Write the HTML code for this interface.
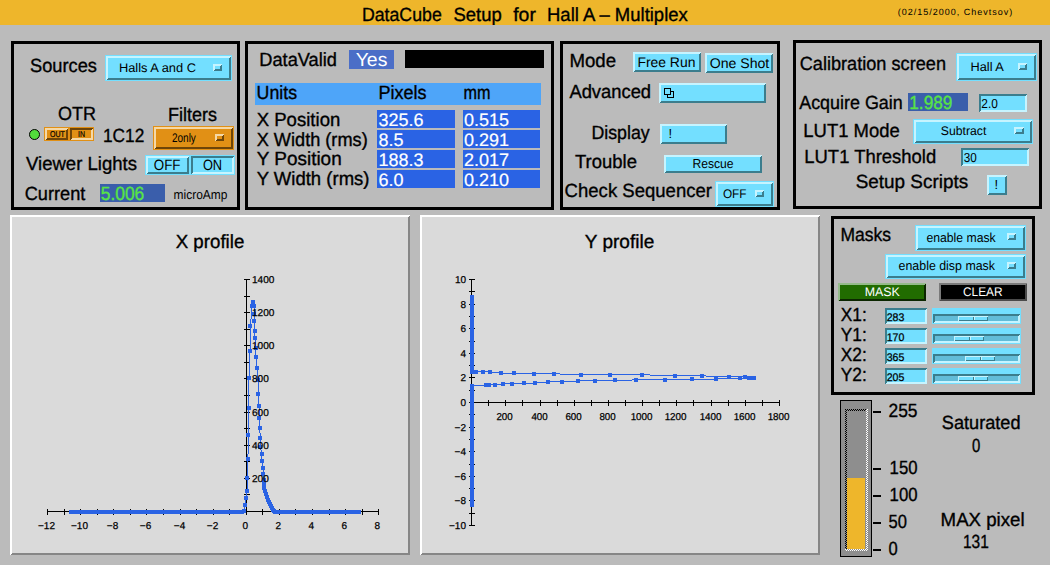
<!DOCTYPE html>
<html><head><meta charset="utf-8"><style>
html,body{margin:0;padding:0;background:#bbbbbb;width:1050px;height:565px;overflow:hidden}
svg text{font-family:"Liberation Sans",sans-serif}
</style></head><body>
<svg width="1050" height="565" viewBox="0 0 1050 565" style="position:absolute;left:0;top:0" shape-rendering="crispEdges" text-rendering="geometricPrecision">
<rect x="0" y="0" width="1050" height="565" fill="#bbbbbb"/>
<rect x="0" y="0" width="1050" height="25" fill="#eeb62b"/>
<text x="361.90" y="21.00" font-size="19" fill="#000" font-weight="normal" textLength="79.90" lengthAdjust="spacingAndGlyphs" stroke="#000" stroke-width="0.35">DataCube</text>
<text x="453.50" y="21.00" font-size="19" fill="#000" font-weight="normal" textLength="48.31" lengthAdjust="spacingAndGlyphs" stroke="#000" stroke-width="0.35">Setup</text>
<text x="513.20" y="21.00" font-size="19" fill="#000" font-weight="normal" textLength="22.70" lengthAdjust="spacingAndGlyphs" stroke="#000" stroke-width="0.35">for</text>
<text x="547.00" y="21.00" font-size="19" fill="#000" font-weight="normal" textLength="140.80" lengthAdjust="spacingAndGlyphs" stroke="#000" stroke-width="0.35">Hall A – Multiplex</text>
<text x="897.70" y="15.40" font-size="9" fill="#000" font-weight="normal" textLength="114.60" lengthAdjust="spacing">(02/15/2000, Chevtsov)</text>
<rect x="11" y="41" width="229" height="3" fill="#000"/>
<rect x="11" y="207" width="229" height="3" fill="#000"/>
<rect x="11" y="41" width="3" height="169" fill="#000"/>
<rect x="237" y="41" width="3" height="169" fill="#000"/>
<rect x="245" y="41" width="309" height="3" fill="#000"/>
<rect x="245" y="207" width="309" height="3" fill="#000"/>
<rect x="245" y="41" width="3" height="169" fill="#000"/>
<rect x="551" y="41" width="3" height="169" fill="#000"/>
<rect x="560" y="41" width="220" height="3" fill="#000"/>
<rect x="560" y="207" width="220" height="3" fill="#000"/>
<rect x="560" y="41" width="3" height="169" fill="#000"/>
<rect x="777" y="41" width="3" height="169" fill="#000"/>
<rect x="793" y="40" width="249" height="3" fill="#000"/>
<rect x="793" y="206" width="249" height="3" fill="#000"/>
<rect x="793" y="40" width="3" height="169" fill="#000"/>
<rect x="1039" y="40" width="3" height="169" fill="#000"/>
<rect x="831" y="216" width="204" height="3" fill="#000"/>
<rect x="831" y="392" width="204" height="3" fill="#000"/>
<rect x="831" y="216" width="3" height="179" fill="#000"/>
<rect x="1032" y="216" width="3" height="179" fill="#000"/>
<text x="30.00" y="71.70" font-size="19" fill="#000" font-weight="normal" textLength="67.01" lengthAdjust="spacingAndGlyphs" stroke="#000" stroke-width="0.35">Sources</text>
<rect x="105" y="55" width="127" height="26" fill="#73dfff"/>
<polygon points="106,56 231,56 229,58 108,58 108,78 106,80" fill="#c6f4ff"/>
<polygon points="231,56 231,80 106,80 108,78 229,78 229,58" fill="#3b7d8d"/>
<polygon points="213,64 222,64 220,66 215,66 215,69 213,71" fill="#c6f4ff"/>
<polygon points="222,64 222,71 213,71 215,69 220,69 220,66" fill="#3b7d8d"/>
<text x="118.90" y="72.00" font-size="12.5" fill="#000" font-weight="normal" textLength="77.11" lengthAdjust="spacingAndGlyphs">Halls A and C</text>
<text x="58.00" y="120.00" font-size="19" fill="#000" font-weight="normal" textLength="38.00" lengthAdjust="spacingAndGlyphs" stroke="#000" stroke-width="0.35">OTR</text>
<text x="168.00" y="120.50" font-size="19" fill="#000" font-weight="normal" textLength="49.00" lengthAdjust="spacingAndGlyphs" stroke="#000" stroke-width="0.35">Filters</text>
<circle cx="34.5" cy="134.5" r="5" fill="#52dc3c" stroke="#000" stroke-width="1" shape-rendering="geometricPrecision"/>
<rect x="44" y="127" width="50" height="14" fill="#e19015"/>
<rect x="45" y="128" width="23" height="12" fill="#e19015"/>
<polygon points="45,128 68,128 66,130 47,130 47,138 45,140" fill="#f5d8a6"/>
<polygon points="68,128 68,140 45,140 47,138 66,138 66,130" fill="#6e4508"/>
<rect x="70" y="128" width="23" height="12" fill="#e19015"/>
<polygon points="70,128 93,128 91,130 72,130 72,138 70,140" fill="#6e4508"/>
<polygon points="93,128 93,140 70,140 72,138 91,138 91,130" fill="#f5d8a6"/>
<text x="50.00" y="137.00" font-size="8.5" fill="#000" font-weight="normal" textLength="14.90" lengthAdjust="spacingAndGlyphs" stroke="#000" stroke-width="0.2">OUT</text>
<text x="78.00" y="137.00" font-size="8.5" fill="#000" font-weight="normal" textLength="7.00" lengthAdjust="spacingAndGlyphs" stroke="#000" stroke-width="0.2">IN</text>
<text x="102.90" y="141.80" font-size="19" fill="#000" font-weight="normal" textLength="41.39" lengthAdjust="spacingAndGlyphs" stroke="#000" stroke-width="0.35">1C12</text>
<rect x="153" y="126" width="81" height="24" fill="#e19015"/>
<polygon points="154,127 233,127 231,129 156,129 156,147 154,149" fill="#f5d8a6"/>
<polygon points="233,127 233,149 154,149 156,147 231,147 231,129" fill="#6e4508"/>
<polygon points="215,134 224,134 222,136 217,136 217,139 215,141" fill="#f5d8a6"/>
<polygon points="224,134 224,141 215,141 217,139 222,139 222,136" fill="#6e4508"/>
<text x="171.90" y="142.10" font-size="12.5" fill="#000" font-weight="normal" textLength="24.00" lengthAdjust="spacingAndGlyphs">2only</text>
<text x="26.00" y="170.20" font-size="19" fill="#000" font-weight="normal" textLength="111.00" lengthAdjust="spacingAndGlyphs" stroke="#000" stroke-width="0.35">Viewer Lights</text>
<rect x="145" y="155" width="90" height="20" fill="#73dfff"/>
<rect x="146" y="156" width="43" height="18" fill="#73dfff"/>
<polygon points="146,156 189,156 187,158 148,158 148,172 146,174" fill="#c6f4ff"/>
<polygon points="189,156 189,174 146,174 148,172 187,172 187,158" fill="#3b7d8d"/>
<rect x="191" y="156" width="43" height="18" fill="#73dfff"/>
<polygon points="191,156 234,156 232,158 193,158 193,172 191,174" fill="#3b7d8d"/>
<polygon points="234,156 234,174 191,174 193,172 232,172 232,158" fill="#c6f4ff"/>
<text x="153.80" y="170.00" font-size="15" fill="#000" font-weight="normal" textLength="26.69" lengthAdjust="spacingAndGlyphs">OFF</text>
<text x="202.90" y="170.00" font-size="15" fill="#000" font-weight="normal" textLength="19.20" lengthAdjust="spacingAndGlyphs">ON</text>
<text x="24.70" y="200.30" font-size="19" fill="#000" font-weight="normal" textLength="60.69" lengthAdjust="spacingAndGlyphs" stroke="#000" stroke-width="0.35">Current</text>
<rect x="100" y="184" width="65" height="18" fill="#3a5eab"/>
<text x="100.70" y="199.90" font-size="19" fill="#58e444" font-weight="normal" textLength="43.61" lengthAdjust="spacingAndGlyphs" stroke="#58e444" stroke-width="0.35">5.006</text>
<text x="173.60" y="198.60" font-size="13" fill="#000" font-weight="normal" textLength="53.79" lengthAdjust="spacingAndGlyphs">microAmp</text>
<text x="259.30" y="65.60" font-size="19" fill="#000" font-weight="normal" textLength="77.70" lengthAdjust="spacingAndGlyphs" stroke="#000" stroke-width="0.35">DataValid</text>
<rect x="349" y="50" width="45" height="19" fill="#4b6ec7"/>
<text x="355.70" y="65.90" font-size="19" fill="#fff" font-weight="normal" textLength="31.71" lengthAdjust="spacingAndGlyphs">Yes</text>
<rect x="405" y="50" width="139" height="18" fill="#000"/>
<rect x="255" y="83" width="286" height="22" fill="#4ea5f9"/>
<text x="256.60" y="99.00" font-size="19" fill="#000" font-weight="normal" textLength="40.41" lengthAdjust="spacingAndGlyphs" stroke="#000" stroke-width="0.35">Units</text>
<text x="378.40" y="99.00" font-size="19" fill="#000" font-weight="normal" textLength="47.99" lengthAdjust="spacingAndGlyphs" stroke="#000" stroke-width="0.35">Pixels</text>
<text x="463.60" y="99.00" font-size="19" fill="#000" font-weight="normal" textLength="27.00" lengthAdjust="spacingAndGlyphs" stroke="#000" stroke-width="0.35">mm</text>
<text x="256.70" y="126.00" font-size="19" fill="#000" font-weight="normal" textLength="83.61" lengthAdjust="spacingAndGlyphs" stroke="#000" stroke-width="0.35">X Position</text>
<rect x="377" y="110" width="78" height="18" fill="#2a63e4"/>
<rect x="463" y="110" width="77" height="18" fill="#2a63e4"/>
<text x="378.50" y="125.50" font-size="18" fill="#fff" font-weight="normal" textLength="45.04" lengthAdjust="spacingAndGlyphs" stroke="#fff" stroke-width="0.2">325.6</text>
<text x="464.00" y="125.50" font-size="18" fill="#fff" font-weight="normal" textLength="45.04" lengthAdjust="spacingAndGlyphs" stroke="#fff" stroke-width="0.2">0.515</text>
<text x="256.70" y="145.50" font-size="19" fill="#000" font-weight="normal" textLength="111.00" lengthAdjust="spacingAndGlyphs" stroke="#000" stroke-width="0.35">X Width (rms)</text>
<rect x="377" y="130" width="78" height="18" fill="#2a63e4"/>
<rect x="463" y="130" width="77" height="18" fill="#2a63e4"/>
<text x="378.50" y="145.50" font-size="18" fill="#fff" font-weight="normal" textLength="25.02" lengthAdjust="spacingAndGlyphs" stroke="#fff" stroke-width="0.2">8.5</text>
<text x="464.00" y="145.50" font-size="18" fill="#fff" font-weight="normal" textLength="45.04" lengthAdjust="spacingAndGlyphs" stroke="#fff" stroke-width="0.2">0.291</text>
<text x="256.70" y="165.00" font-size="19" fill="#000" font-weight="normal" textLength="85.01" lengthAdjust="spacingAndGlyphs" stroke="#000" stroke-width="0.35">Y Position</text>
<rect x="377" y="150" width="78" height="18" fill="#2a63e4"/>
<rect x="463" y="150" width="77" height="18" fill="#2a63e4"/>
<text x="378.50" y="165.50" font-size="18" fill="#fff" font-weight="normal" textLength="45.04" lengthAdjust="spacingAndGlyphs" stroke="#fff" stroke-width="0.2">188.3</text>
<text x="464.00" y="165.50" font-size="18" fill="#fff" font-weight="normal" textLength="45.04" lengthAdjust="spacingAndGlyphs" stroke="#fff" stroke-width="0.2">2.017</text>
<text x="256.70" y="184.50" font-size="19" fill="#000" font-weight="normal" textLength="112.80" lengthAdjust="spacingAndGlyphs" stroke="#000" stroke-width="0.35">Y Width (rms)</text>
<rect x="377" y="170" width="78" height="18" fill="#2a63e4"/>
<rect x="463" y="170" width="77" height="18" fill="#2a63e4"/>
<text x="378.50" y="185.50" font-size="18" fill="#fff" font-weight="normal" textLength="25.02" lengthAdjust="spacingAndGlyphs" stroke="#fff" stroke-width="0.2">6.0</text>
<text x="464.00" y="185.50" font-size="18" fill="#fff" font-weight="normal" textLength="45.04" lengthAdjust="spacingAndGlyphs" stroke="#fff" stroke-width="0.2">0.210</text>
<text x="569.40" y="66.60" font-size="19" fill="#000" font-weight="normal" textLength="46.71" lengthAdjust="spacingAndGlyphs" stroke="#000" stroke-width="0.35">Mode</text>
<rect x="633" y="52" width="68" height="20" fill="#73dfff"/>
<polygon points="633,52 701,52 699,54 635,54 635,70 633,72" fill="#c6f4ff"/>
<polygon points="701,52 701,72 633,72 635,70 699,70 699,54" fill="#3b7d8d"/>
<text x="637.40" y="66.60" font-size="14" fill="#000" font-weight="normal" textLength="58.01" lengthAdjust="spacingAndGlyphs">Free Run</text>
<rect x="705" y="53" width="68" height="20" fill="#73dfff"/>
<polygon points="705,53 773,53 771,55 707,55 707,71 705,73" fill="#c6f4ff"/>
<polygon points="773,53 773,73 705,73 707,71 771,71 771,55" fill="#3b7d8d"/>
<text x="709.70" y="67.60" font-size="14" fill="#000" font-weight="normal" textLength="59.60" lengthAdjust="spacingAndGlyphs">One Shot</text>
<text x="569.40" y="97.80" font-size="19" fill="#000" font-weight="normal" textLength="81.70" lengthAdjust="spacingAndGlyphs" stroke="#000" stroke-width="0.35">Advanced</text>
<rect x="659" y="83" width="107" height="20" fill="#73dfff"/>
<polygon points="659,83 766,83 764,85 661,85 661,101 659,103" fill="#c6f4ff"/>
<polygon points="766,83 766,103 659,103 661,101 764,101 764,85" fill="#3b7d8d"/>
<g stroke="#000" stroke-width="1"><rect x="667.5" y="91.5" width="6" height="6" fill="none"/><rect x="664.5" y="88.5" width="6" height="6" fill="#73dfff"/></g>
<text x="591.40" y="139.30" font-size="19" fill="#000" font-weight="normal" textLength="58.30" lengthAdjust="spacingAndGlyphs" stroke="#000" stroke-width="0.35">Display</text>
<rect x="660" y="124" width="67" height="20" fill="#73dfff"/>
<polygon points="660,124 727,124 725,126 662,126 662,142 660,144" fill="#c6f4ff"/>
<polygon points="727,124 727,144 660,144 662,142 725,142 725,126" fill="#3b7d8d"/>
<text x="668.50" y="138.40" font-size="13" fill="#000" font-weight="normal" textLength="3.61" lengthAdjust="spacingAndGlyphs">!</text>
<text x="575.00" y="168.20" font-size="19" fill="#000" font-weight="normal" textLength="61.99" lengthAdjust="spacingAndGlyphs" stroke="#000" stroke-width="0.35">Trouble</text>
<rect x="664" y="155" width="98" height="18" fill="#73dfff"/>
<polygon points="664,155 762,155 760,157 666,157 666,171 664,173" fill="#c6f4ff"/>
<polygon points="762,155 762,173 664,173 666,171 760,171 760,157" fill="#3b7d8d"/>
<text x="692.40" y="168.00" font-size="13" fill="#000" font-weight="normal" textLength="41.10" lengthAdjust="spacingAndGlyphs">Rescue</text>
<text x="564.60" y="197.40" font-size="19" fill="#000" font-weight="normal" textLength="147.40" lengthAdjust="spacingAndGlyphs" stroke="#000" stroke-width="0.35">Check Sequencer</text>
<rect x="715" y="181" width="59" height="26" fill="#73dfff"/>
<polygon points="716,182 773,182 771,184 718,184 718,204 716,206" fill="#c6f4ff"/>
<polygon points="773,182 773,206 716,206 718,204 771,204 771,184" fill="#3b7d8d"/>
<polygon points="755,190 764,190 762,192 757,192 757,195 755,197" fill="#c6f4ff"/>
<polygon points="764,190 764,197 755,197 757,195 762,195 762,192" fill="#3b7d8d"/>
<text x="722.90" y="197.90" font-size="12.5" fill="#000" font-weight="normal" textLength="23.59" lengthAdjust="spacingAndGlyphs">OFF</text>
<text x="799.70" y="70.00" font-size="19" fill="#000" font-weight="normal" textLength="146.29" lengthAdjust="spacingAndGlyphs" stroke="#000" stroke-width="0.35">Calibration screen</text>
<rect x="956" y="53" width="81" height="28" fill="#73dfff"/>
<polygon points="957,54 1036,54 1034,56 959,56 959,78 957,80" fill="#c6f4ff"/>
<polygon points="1036,54 1036,80 957,80 959,78 1034,78 1034,56" fill="#3b7d8d"/>
<polygon points="1018,63 1027,63 1025,65 1020,65 1020,68 1018,70" fill="#c6f4ff"/>
<polygon points="1027,63 1027,70 1018,70 1020,68 1025,68 1025,65" fill="#3b7d8d"/>
<text x="970.50" y="70.70" font-size="12.5" fill="#000" font-weight="normal" textLength="33.30" lengthAdjust="spacingAndGlyphs">Hall A</text>
<text x="799.20" y="108.50" font-size="19" fill="#000" font-weight="normal" textLength="103.60" lengthAdjust="spacingAndGlyphs" stroke="#000" stroke-width="0.35">Acquire Gain</text>
<rect x="908" y="93" width="60" height="18" fill="#3a5eab"/>
<text x="909.30" y="108.50" font-size="19" fill="#58e444" font-weight="normal" textLength="43.01" lengthAdjust="spacingAndGlyphs" stroke="#58e444" stroke-width="0.35">1.989</text>
<rect x="979" y="94" width="48" height="18" fill="#73dfff"/>
<polygon points="979,94 1027,94 1025,96 981,96 981,110 979,112" fill="#3b7d8d"/>
<polygon points="1027,94 1027,112 979,112 981,110 1025,110 1025,96" fill="#c6f4ff"/>
<text x="981.30" y="107.90" font-size="13" fill="#000" font-weight="normal" textLength="16.50" lengthAdjust="spacingAndGlyphs">2.0</text>
<text x="803.30" y="136.70" font-size="19" fill="#000" font-weight="normal" textLength="96.49" lengthAdjust="spacingAndGlyphs" stroke="#000" stroke-width="0.35">LUT1 Mode</text>
<rect x="913" y="119" width="120" height="25" fill="#73dfff"/>
<polygon points="914,120 1032,120 1030,122 916,122 916,141 914,143" fill="#c6f4ff"/>
<polygon points="1032,120 1032,143 914,143 916,141 1030,141 1030,122" fill="#3b7d8d"/>
<polygon points="1014,127 1024,127 1022,129 1016,129 1016,132 1014,134" fill="#c6f4ff"/>
<polygon points="1024,127 1024,134 1014,134 1016,132 1022,132 1022,129" fill="#3b7d8d"/>
<text x="940.80" y="135.00" font-size="12.5" fill="#000" font-weight="normal" textLength="45.50" lengthAdjust="spacingAndGlyphs">Subtract</text>
<text x="804.30" y="162.50" font-size="19" fill="#000" font-weight="normal" textLength="131.90" lengthAdjust="spacingAndGlyphs" stroke="#000" stroke-width="0.35">LUT1 Threshold</text>
<rect x="961" y="148" width="68" height="18" fill="#73dfff"/>
<polygon points="961,148 1029,148 1027,150 963,150 963,164 961,166" fill="#3b7d8d"/>
<polygon points="1029,148 1029,166 961,166 963,164 1027,164 1027,150" fill="#c6f4ff"/>
<text x="963.80" y="162.00" font-size="13" fill="#000" font-weight="normal" textLength="13.00" lengthAdjust="spacingAndGlyphs">30</text>
<text x="855.70" y="188.20" font-size="19" fill="#000" font-weight="normal" textLength="112.41" lengthAdjust="spacingAndGlyphs" stroke="#000" stroke-width="0.35">Setup Scripts</text>
<rect x="987" y="175" width="20" height="20" fill="#73dfff"/>
<polygon points="987,175 1007,175 1005,177 989,177 989,193 987,195" fill="#c6f4ff"/>
<polygon points="1007,175 1007,195 987,195 989,193 1005,193 1005,177" fill="#3b7d8d"/>
<text x="994.59" y="189.20" font-size="13" fill="#000" font-weight="normal" textLength="3.61" lengthAdjust="spacingAndGlyphs">!</text>
<text x="840.40" y="241.00" font-size="19" fill="#000" font-weight="normal" textLength="50.60" lengthAdjust="spacingAndGlyphs" stroke="#000" stroke-width="0.35">Masks</text>
<rect x="915" y="225" width="111" height="26" fill="#73dfff"/>
<polygon points="916,226 1025,226 1023,228 918,228 918,248 916,250" fill="#c6f4ff"/>
<polygon points="1025,226 1025,250 916,250 918,248 1023,248 1023,228" fill="#3b7d8d"/>
<polygon points="1007,233 1016,233 1014,235 1009,235 1009,238 1007,240" fill="#c6f4ff"/>
<polygon points="1016,233 1016,240 1007,240 1009,238 1014,238 1014,235" fill="#3b7d8d"/>
<text x="926.40" y="241.70" font-size="13" fill="#000" font-weight="normal" textLength="69.27" lengthAdjust="spacingAndGlyphs">enable mask</text>
<rect x="885" y="254" width="141" height="25" fill="#73dfff"/>
<polygon points="886,255 1025,255 1023,257 888,257 888,276 886,278" fill="#c6f4ff"/>
<polygon points="1025,255 1025,278 886,278 888,276 1023,276 1023,257" fill="#3b7d8d"/>
<polygon points="1007,262 1016,262 1014,264 1009,264 1009,267 1007,269" fill="#c6f4ff"/>
<polygon points="1016,262 1016,269 1007,269 1009,267 1014,267 1014,264" fill="#3b7d8d"/>
<text x="898.60" y="269.60" font-size="13" fill="#000" font-weight="normal" textLength="96.38" lengthAdjust="spacingAndGlyphs">enable disp mask</text>
<rect x="838" y="283" width="88" height="18" fill="#216c00"/>
<polygon points="838,283 926,283 924,285 840,285 840,299 838,301" fill="#94bb8a"/>
<polygon points="926,283 926,301 838,301 840,299 924,299 924,285" fill="#0b2600"/>
<text x="864.70" y="296.00" font-size="12.5" fill="#fff" font-weight="normal" textLength="35.20" lengthAdjust="spacingAndGlyphs">MASK</text>
<rect x="939" y="283" width="88" height="18" fill="#000000"/>
<polygon points="939,283 1027,283 1025,285 941,285 941,299 939,301" fill="#7a7a7a"/>
<polygon points="1027,283 1027,301 939,301 941,299 1025,299 1025,285" fill="#4a4a4a"/>
<text x="963.00" y="296.00" font-size="12.5" fill="#fff" font-weight="normal" textLength="39.59" lengthAdjust="spacingAndGlyphs">CLEAR</text>
<text x="840.80" y="320.70" font-size="19" fill="#000" font-weight="normal" textLength="26.00" lengthAdjust="spacingAndGlyphs" stroke="#000" stroke-width="0.35">X1:</text>
<rect x="885" y="308" width="42" height="16" fill="#73dfff"/>
<polygon points="885,308 927,308 925,310 887,310 887,322 885,324" fill="#3b7d8d"/>
<polygon points="927,308 927,324 885,324 887,322 925,322 925,310" fill="#c6f4ff"/>
<text x="886.70" y="320.70" font-size="11" fill="#000" font-weight="normal" textLength="17.60" lengthAdjust="spacingAndGlyphs" stroke="#000" stroke-width="0.25">283</text>
<rect x="932" y="308" width="89" height="16" fill="#73dfff"/>
<rect x="933" y="314" width="87" height="9" fill="#62bcd8"/>
<polygon points="933,314 1020,314 1018,316 935,316 935,321 933,323" fill="#3b7d8d"/>
<polygon points="1020,314 1020,323 933,323 935,321 1018,321 1018,316" fill="#c6f4ff"/>
<rect x="958" y="316" width="30" height="5" fill="#73dfff"/>
<polygon points="958,316 988,316 987,317 959,317 959,320 958,321" fill="#c6f4ff"/>
<polygon points="988,316 988,321 958,321 959,320 987,320 987,317" fill="#3b7d8d"/>
<rect x="973" y="317" width="1" height="3" fill="#3b7d8d"/>
<rect x="974" y="317" width="1" height="3" fill="#c6f4ff"/>
<text x="840.80" y="340.70" font-size="19" fill="#000" font-weight="normal" textLength="26.00" lengthAdjust="spacingAndGlyphs" stroke="#000" stroke-width="0.35">Y1:</text>
<rect x="885" y="328" width="42" height="16" fill="#73dfff"/>
<polygon points="885,328 927,328 925,330 887,330 887,342 885,344" fill="#3b7d8d"/>
<polygon points="927,328 927,344 885,344 887,342 925,342 925,330" fill="#c6f4ff"/>
<text x="886.70" y="340.70" font-size="11" fill="#000" font-weight="normal" textLength="17.60" lengthAdjust="spacingAndGlyphs" stroke="#000" stroke-width="0.25">170</text>
<rect x="932" y="328" width="89" height="16" fill="#73dfff"/>
<rect x="933" y="334" width="87" height="9" fill="#62bcd8"/>
<polygon points="933,334 1020,334 1018,336 935,336 935,341 933,343" fill="#3b7d8d"/>
<polygon points="1020,334 1020,343 933,343 935,341 1018,341 1018,336" fill="#c6f4ff"/>
<rect x="954" y="336" width="30" height="5" fill="#73dfff"/>
<polygon points="954,336 984,336 983,337 955,337 955,340 954,341" fill="#c6f4ff"/>
<polygon points="984,336 984,341 954,341 955,340 983,340 983,337" fill="#3b7d8d"/>
<rect x="969" y="337" width="1" height="3" fill="#3b7d8d"/>
<rect x="970" y="337" width="1" height="3" fill="#c6f4ff"/>
<text x="840.80" y="360.70" font-size="19" fill="#000" font-weight="normal" textLength="26.00" lengthAdjust="spacingAndGlyphs" stroke="#000" stroke-width="0.35">X2:</text>
<rect x="885" y="348" width="42" height="16" fill="#73dfff"/>
<polygon points="885,348 927,348 925,350 887,350 887,362 885,364" fill="#3b7d8d"/>
<polygon points="927,348 927,364 885,364 887,362 925,362 925,350" fill="#c6f4ff"/>
<text x="886.70" y="360.70" font-size="11" fill="#000" font-weight="normal" textLength="17.60" lengthAdjust="spacingAndGlyphs" stroke="#000" stroke-width="0.25">365</text>
<rect x="932" y="348" width="89" height="16" fill="#73dfff"/>
<rect x="933" y="354" width="87" height="9" fill="#62bcd8"/>
<polygon points="933,354 1020,354 1018,356 935,356 935,361 933,363" fill="#3b7d8d"/>
<polygon points="1020,354 1020,363 933,363 935,361 1018,361 1018,356" fill="#c6f4ff"/>
<rect x="965" y="356" width="30" height="5" fill="#73dfff"/>
<polygon points="965,356 995,356 994,357 966,357 966,360 965,361" fill="#c6f4ff"/>
<polygon points="995,356 995,361 965,361 966,360 994,360 994,357" fill="#3b7d8d"/>
<rect x="980" y="357" width="1" height="3" fill="#3b7d8d"/>
<rect x="981" y="357" width="1" height="3" fill="#c6f4ff"/>
<text x="840.80" y="380.70" font-size="19" fill="#000" font-weight="normal" textLength="26.00" lengthAdjust="spacingAndGlyphs" stroke="#000" stroke-width="0.35">Y2:</text>
<rect x="885" y="368" width="42" height="16" fill="#73dfff"/>
<polygon points="885,368 927,368 925,370 887,370 887,382 885,384" fill="#3b7d8d"/>
<polygon points="927,368 927,384 885,384 887,382 925,382 925,370" fill="#c6f4ff"/>
<text x="886.70" y="380.70" font-size="11" fill="#000" font-weight="normal" textLength="17.60" lengthAdjust="spacingAndGlyphs" stroke="#000" stroke-width="0.25">205</text>
<rect x="932" y="368" width="89" height="16" fill="#73dfff"/>
<rect x="933" y="374" width="87" height="9" fill="#62bcd8"/>
<polygon points="933,374 1020,374 1018,376 935,376 935,381 933,383" fill="#3b7d8d"/>
<polygon points="1020,374 1020,383 933,383 935,381 1018,381 1018,376" fill="#c6f4ff"/>
<rect x="958" y="376" width="30" height="5" fill="#73dfff"/>
<polygon points="958,376 988,376 987,377 959,377 959,380 958,381" fill="#c6f4ff"/>
<polygon points="988,376 988,381 958,381 959,380 987,380 987,377" fill="#3b7d8d"/>
<rect x="973" y="377" width="1" height="3" fill="#3b7d8d"/>
<rect x="974" y="377" width="1" height="3" fill="#c6f4ff"/>
<rect x="840" y="400" width="32" height="157" fill="#000"/>
<rect x="841" y="401" width="30" height="155" fill="#8e8e8e"/>
<g shape-rendering="crispEdges">
</g>
<defs><pattern id="pk" width="2" height="2" patternUnits="userSpaceOnUse"><rect x="0" y="0" width="1" height="1" fill="#000"/><rect x="1" y="1" width="1" height="1" fill="#000"/></pattern><pattern id="pw" width="2" height="2" patternUnits="userSpaceOnUse"><rect x="0" y="0" width="1" height="1" fill="#fff"/><rect x="1" y="1" width="1" height="1" fill="#fff"/></pattern></defs>
<rect x="845" y="409" width="2" height="142" fill="url(#pk)"/>
<rect x="845" y="409" width="23" height="2" fill="url(#pk)"/>
<rect x="866" y="409" width="2" height="142" fill="url(#pw)"/>
<rect x="845" y="549" width="23" height="2" fill="url(#pw)"/>
<rect x="847" y="478" width="18" height="71" fill="#eeb62b"/>
<rect x="873" y="411" width="8" height="2" fill="#000"/>
<rect x="873" y="468" width="8" height="2" fill="#000"/>
<rect x="873" y="495" width="8" height="2" fill="#000"/>
<rect x="873" y="522" width="8" height="2" fill="#000"/>
<rect x="873" y="549" width="8" height="2" fill="#000"/>
<text x="888.50" y="417.00" font-size="19" fill="#000" font-weight="normal" textLength="29.01" lengthAdjust="spacingAndGlyphs" stroke="#000" stroke-width="0.35">255</text>
<text x="889.60" y="474.00" font-size="19" fill="#000" font-weight="normal" textLength="27.91" lengthAdjust="spacingAndGlyphs" stroke="#000" stroke-width="0.35">150</text>
<text x="889.60" y="501.20" font-size="19" fill="#000" font-weight="normal" textLength="27.91" lengthAdjust="spacingAndGlyphs" stroke="#000" stroke-width="0.35">100</text>
<text x="888.50" y="528.00" font-size="19" fill="#000" font-weight="normal" textLength="18.41" lengthAdjust="spacingAndGlyphs" stroke="#000" stroke-width="0.35">50</text>
<text x="888.50" y="554.80" font-size="19" fill="#000" font-weight="normal" textLength="9.20" lengthAdjust="spacingAndGlyphs" stroke="#000" stroke-width="0.35">0</text>
<text x="941.80" y="429.00" font-size="19" fill="#000" font-weight="normal" textLength="78.71" lengthAdjust="spacingAndGlyphs" stroke="#000" stroke-width="0.35">Saturated</text>
<text x="971.90" y="451.80" font-size="19" fill="#000" font-weight="normal" textLength="8.30" lengthAdjust="spacingAndGlyphs" stroke="#000" stroke-width="0.35">0</text>
<text x="940.60" y="525.80" font-size="19" fill="#000" font-weight="normal" textLength="83.99" lengthAdjust="spacingAndGlyphs" stroke="#000" stroke-width="0.35">MAX pixel</text>
<text x="963.00" y="548.40" font-size="19" fill="#000" font-weight="normal" textLength="25.81" lengthAdjust="spacingAndGlyphs" stroke="#000" stroke-width="0.35">131</text>
<rect x="10" y="215" width="400" height="340" fill="#dadada"/>
<polygon points="10,215 410,215 408,217 12,217 12,553 10,555" fill="#ffffff"/>
<polygon points="410,215 410,555 10,555 12,553 408,553 408,217" fill="#868686"/>
<rect x="420" y="215" width="400" height="340" fill="#dadada"/>
<polygon points="420,215 820,215 818,217 422,217 422,553 420,555" fill="#ffffff"/>
<polygon points="820,215 820,555 420,555 422,553 818,553 818,217" fill="#868686"/>
<text x="175.70" y="248.00" font-size="19" fill="#000" font-weight="normal" textLength="68.61" lengthAdjust="spacingAndGlyphs" stroke="#000" stroke-width="0.35">X profile</text>
<text x="584.80" y="247.90" font-size="19" fill="#000" font-weight="normal" textLength="69.51" lengthAdjust="spacingAndGlyphs" stroke="#000" stroke-width="0.35">Y profile</text>
<g shape-rendering="crispEdges">
<rect x="246" y="279" width="1" height="233" fill="#000"/>
<rect x="244" y="511" width="6" height="1" fill="#000"/>
<rect x="244" y="494" width="6" height="1" fill="#000"/>
<rect x="244" y="478" width="6" height="1" fill="#000"/>
<rect x="244" y="461" width="6" height="1" fill="#000"/>
<rect x="244" y="445" width="6" height="1" fill="#000"/>
<rect x="244" y="428" width="6" height="1" fill="#000"/>
<rect x="244" y="412" width="6" height="1" fill="#000"/>
<rect x="244" y="395" width="6" height="1" fill="#000"/>
<rect x="244" y="378" width="6" height="1" fill="#000"/>
<rect x="244" y="362" width="6" height="1" fill="#000"/>
<rect x="244" y="345" width="6" height="1" fill="#000"/>
<rect x="244" y="329" width="6" height="1" fill="#000"/>
<rect x="244" y="312" width="6" height="1" fill="#000"/>
<rect x="244" y="296" width="6" height="1" fill="#000"/>
<rect x="244" y="279" width="6" height="1" fill="#000"/>
<rect x="47" y="511" width="332" height="1" fill="#000"/>
<rect x="47" y="509" width="1" height="6" fill="#000"/>
<rect x="64" y="509" width="1" height="6" fill="#000"/>
<rect x="80" y="509" width="1" height="6" fill="#000"/>
<rect x="97" y="509" width="1" height="6" fill="#000"/>
<rect x="113" y="509" width="1" height="6" fill="#000"/>
<rect x="130" y="509" width="1" height="6" fill="#000"/>
<rect x="146" y="509" width="1" height="6" fill="#000"/>
<rect x="163" y="509" width="1" height="6" fill="#000"/>
<rect x="180" y="509" width="1" height="6" fill="#000"/>
<rect x="196" y="509" width="1" height="6" fill="#000"/>
<rect x="213" y="509" width="1" height="6" fill="#000"/>
<rect x="229" y="509" width="1" height="6" fill="#000"/>
<rect x="246" y="509" width="1" height="6" fill="#000"/>
<rect x="262" y="509" width="1" height="6" fill="#000"/>
<rect x="279" y="509" width="1" height="6" fill="#000"/>
<rect x="295" y="509" width="1" height="6" fill="#000"/>
<rect x="312" y="509" width="1" height="6" fill="#000"/>
<rect x="329" y="509" width="1" height="6" fill="#000"/>
<rect x="345" y="509" width="1" height="6" fill="#000"/>
<rect x="362" y="509" width="1" height="6" fill="#000"/>
<rect x="378" y="509" width="1" height="6" fill="#000"/>
<rect x="69" y="510" width="175" height="4" fill="#2a63e4"/>
<rect x="273" y="510" width="88" height="4" fill="#2a63e4"/>
<polyline fill="none" stroke="#2a63e4" stroke-width="1" shape-rendering="crispEdges" points="244,511 245,505 246,498 247,491 247,478 247.9,459 248.4,435 248.8,408 249,378.5 250,351 250.5,326 252,306 253,302 253,302 254,306 254.5,313.5 254.5,321.4 254.8,330.7 255,338.5 255.8,347.5 256,357 257,367.6 258.3,380.3 258.5,394 259,406 259.3,418 259.8,427.7 260.2,438 260.5,447 261.8,453.7 262,461 263,467.5 263,474 263.5,480 264,484 264.5,488 265,491 266,494 267,497 268,500 269,502 270,504 271,506 272,508 273,510 274,511 275,512"/>
<rect x="242" y="509" width="4" height="4" fill="#2a63e4"/>
<rect x="243" y="503" width="4" height="4" fill="#2a63e4"/>
<rect x="244" y="496" width="4" height="4" fill="#2a63e4"/>
<rect x="245" y="489" width="4" height="4" fill="#2a63e4"/>
<rect x="245" y="476" width="4" height="4" fill="#2a63e4"/>
<rect x="246" y="457" width="4" height="4" fill="#2a63e4"/>
<rect x="246" y="433" width="4" height="4" fill="#2a63e4"/>
<rect x="247" y="406" width="4" height="4" fill="#2a63e4"/>
<rect x="247" y="376" width="4" height="4" fill="#2a63e4"/>
<rect x="248" y="349" width="4" height="4" fill="#2a63e4"/>
<rect x="248" y="324" width="4" height="4" fill="#2a63e4"/>
<rect x="250" y="304" width="4" height="4" fill="#2a63e4"/>
<rect x="251" y="300" width="4" height="4" fill="#2a63e4"/>
<rect x="251" y="300" width="4" height="4" fill="#2a63e4"/>
<rect x="252" y="304" width="4" height="4" fill="#2a63e4"/>
<rect x="252" y="312" width="4" height="4" fill="#2a63e4"/>
<rect x="252" y="319" width="4" height="4" fill="#2a63e4"/>
<rect x="253" y="329" width="4" height="4" fill="#2a63e4"/>
<rect x="253" y="336" width="4" height="4" fill="#2a63e4"/>
<rect x="254" y="346" width="4" height="4" fill="#2a63e4"/>
<rect x="254" y="355" width="4" height="4" fill="#2a63e4"/>
<rect x="255" y="366" width="4" height="4" fill="#2a63e4"/>
<rect x="256" y="378" width="4" height="4" fill="#2a63e4"/>
<rect x="256" y="392" width="4" height="4" fill="#2a63e4"/>
<rect x="257" y="404" width="4" height="4" fill="#2a63e4"/>
<rect x="257" y="416" width="4" height="4" fill="#2a63e4"/>
<rect x="258" y="426" width="4" height="4" fill="#2a63e4"/>
<rect x="258" y="436" width="4" height="4" fill="#2a63e4"/>
<rect x="258" y="445" width="4" height="4" fill="#2a63e4"/>
<rect x="260" y="452" width="4" height="4" fill="#2a63e4"/>
<rect x="260" y="459" width="4" height="4" fill="#2a63e4"/>
<rect x="261" y="466" width="4" height="4" fill="#2a63e4"/>
<rect x="261" y="472" width="4" height="4" fill="#2a63e4"/>
<rect x="262" y="478" width="4" height="4" fill="#2a63e4"/>
<rect x="262" y="482" width="4" height="4" fill="#2a63e4"/>
<rect x="262" y="486" width="4" height="4" fill="#2a63e4"/>
<rect x="263" y="489" width="4" height="4" fill="#2a63e4"/>
<rect x="264" y="492" width="4" height="4" fill="#2a63e4"/>
<rect x="265" y="495" width="4" height="4" fill="#2a63e4"/>
<rect x="266" y="498" width="4" height="4" fill="#2a63e4"/>
<rect x="267" y="500" width="4" height="4" fill="#2a63e4"/>
<rect x="268" y="502" width="4" height="4" fill="#2a63e4"/>
<rect x="269" y="504" width="4" height="4" fill="#2a63e4"/>
<rect x="270" y="506" width="4" height="4" fill="#2a63e4"/>
<rect x="271" y="508" width="4" height="4" fill="#2a63e4"/>
<rect x="272" y="509" width="4" height="4" fill="#2a63e4"/>
<rect x="273" y="510" width="4" height="4" fill="#2a63e4"/>
<rect x="471" y="279" width="1" height="247" fill="#000"/>
<rect x="469" y="525" width="6" height="1" fill="#000"/>
<rect x="469" y="513" width="6" height="1" fill="#000"/>
<rect x="469" y="500" width="6" height="1" fill="#000"/>
<rect x="469" y="488" width="6" height="1" fill="#000"/>
<rect x="469" y="476" width="6" height="1" fill="#000"/>
<rect x="469" y="464" width="6" height="1" fill="#000"/>
<rect x="469" y="451" width="6" height="1" fill="#000"/>
<rect x="469" y="439" width="6" height="1" fill="#000"/>
<rect x="469" y="427" width="6" height="1" fill="#000"/>
<rect x="469" y="414" width="6" height="1" fill="#000"/>
<rect x="469" y="402" width="6" height="1" fill="#000"/>
<rect x="469" y="390" width="6" height="1" fill="#000"/>
<rect x="469" y="377" width="6" height="1" fill="#000"/>
<rect x="469" y="365" width="6" height="1" fill="#000"/>
<rect x="469" y="353" width="6" height="1" fill="#000"/>
<rect x="469" y="341" width="6" height="1" fill="#000"/>
<rect x="469" y="328" width="6" height="1" fill="#000"/>
<rect x="469" y="316" width="6" height="1" fill="#000"/>
<rect x="469" y="304" width="6" height="1" fill="#000"/>
<rect x="469" y="291" width="6" height="1" fill="#000"/>
<rect x="469" y="279" width="6" height="1" fill="#000"/>
<rect x="471" y="402" width="309" height="1" fill="#000"/>
<rect x="471" y="400" width="1" height="6" fill="#000"/>
<rect x="488" y="400" width="1" height="6" fill="#000"/>
<rect x="505" y="400" width="1" height="6" fill="#000"/>
<rect x="522" y="400" width="1" height="6" fill="#000"/>
<rect x="540" y="400" width="1" height="6" fill="#000"/>
<rect x="557" y="400" width="1" height="6" fill="#000"/>
<rect x="574" y="400" width="1" height="6" fill="#000"/>
<rect x="591" y="400" width="1" height="6" fill="#000"/>
<rect x="608" y="400" width="1" height="6" fill="#000"/>
<rect x="625" y="400" width="1" height="6" fill="#000"/>
<rect x="642" y="400" width="1" height="6" fill="#000"/>
<rect x="659" y="400" width="1" height="6" fill="#000"/>
<rect x="676" y="400" width="1" height="6" fill="#000"/>
<rect x="693" y="400" width="1" height="6" fill="#000"/>
<rect x="711" y="400" width="1" height="6" fill="#000"/>
<rect x="728" y="400" width="1" height="6" fill="#000"/>
<rect x="745" y="400" width="1" height="6" fill="#000"/>
<rect x="762" y="400" width="1" height="6" fill="#000"/>
<rect x="779" y="400" width="1" height="6" fill="#000"/>
<rect x="470" y="295" width="4" height="79" fill="#2a63e4"/>
<rect x="470" y="384" width="4" height="123" fill="#2a63e4"/>
<polyline fill="none" stroke="#2a63e4" stroke-width="1" shape-rendering="crispEdges" points="472,370 475.7,371.9 482.9,371.9 490,371.9 500.7,373 513.9,373 533.9,373.7 553.9,373.7 581,375 610,374.8 642.3,374.8 674.9,375.7 701.9,375.9 729,376.7 745,376.7 751,378 753.7,378"/>
<rect x="474" y="370" width="4" height="4" fill="#2a63e4"/>
<rect x="481" y="370" width="4" height="4" fill="#2a63e4"/>
<rect x="488" y="370" width="4" height="4" fill="#2a63e4"/>
<rect x="499" y="371" width="4" height="4" fill="#2a63e4"/>
<rect x="512" y="371" width="4" height="4" fill="#2a63e4"/>
<rect x="532" y="372" width="4" height="4" fill="#2a63e4"/>
<rect x="552" y="372" width="4" height="4" fill="#2a63e4"/>
<rect x="579" y="373" width="4" height="4" fill="#2a63e4"/>
<rect x="608" y="373" width="4" height="4" fill="#2a63e4"/>
<rect x="640" y="373" width="4" height="4" fill="#2a63e4"/>
<rect x="673" y="374" width="4" height="4" fill="#2a63e4"/>
<rect x="700" y="374" width="4" height="4" fill="#2a63e4"/>
<rect x="727" y="375" width="4" height="4" fill="#2a63e4"/>
<rect x="743" y="375" width="4" height="4" fill="#2a63e4"/>
<rect x="749" y="376" width="4" height="4" fill="#2a63e4"/>
<rect x="752" y="376" width="4" height="4" fill="#2a63e4"/>
<polyline fill="none" stroke="#2a63e4" stroke-width="1" shape-rendering="crispEdges" points="472,385.3 486.4,385 489.3,385 495,384.9 502.9,383.9 511.9,383.9 523.9,383 535,383 547.9,381.9 561.9,381.9 577.9,380.9 595,380.9 615,380.5 635.8,379.9 664.8,379.9 691.8,379 715.6,379 740,378 748.6,378 753.7,378"/>
<rect x="484" y="383" width="4" height="4" fill="#2a63e4"/>
<rect x="487" y="383" width="4" height="4" fill="#2a63e4"/>
<rect x="493" y="383" width="4" height="4" fill="#2a63e4"/>
<rect x="501" y="382" width="4" height="4" fill="#2a63e4"/>
<rect x="510" y="382" width="4" height="4" fill="#2a63e4"/>
<rect x="522" y="381" width="4" height="4" fill="#2a63e4"/>
<rect x="533" y="381" width="4" height="4" fill="#2a63e4"/>
<rect x="546" y="380" width="4" height="4" fill="#2a63e4"/>
<rect x="560" y="380" width="4" height="4" fill="#2a63e4"/>
<rect x="576" y="379" width="4" height="4" fill="#2a63e4"/>
<rect x="593" y="379" width="4" height="4" fill="#2a63e4"/>
<rect x="613" y="378" width="4" height="4" fill="#2a63e4"/>
<rect x="634" y="378" width="4" height="4" fill="#2a63e4"/>
<rect x="663" y="378" width="4" height="4" fill="#2a63e4"/>
<rect x="690" y="377" width="4" height="4" fill="#2a63e4"/>
<rect x="714" y="377" width="4" height="4" fill="#2a63e4"/>
<rect x="738" y="376" width="4" height="4" fill="#2a63e4"/>
<rect x="747" y="376" width="4" height="4" fill="#2a63e4"/>
<rect x="752" y="376" width="4" height="4" fill="#2a63e4"/>
</g>
<text x="252.00" y="482.00" font-size="10" fill="#000" font-weight="normal" textLength="16.80" lengthAdjust="spacingAndGlyphs" stroke="#000" stroke-width="0.25">200</text>
<text x="252.00" y="449.00" font-size="10" fill="#000" font-weight="normal" textLength="16.80" lengthAdjust="spacingAndGlyphs" stroke="#000" stroke-width="0.25">400</text>
<text x="252.00" y="416.00" font-size="10" fill="#000" font-weight="normal" textLength="16.80" lengthAdjust="spacingAndGlyphs" stroke="#000" stroke-width="0.25">600</text>
<text x="252.00" y="382.00" font-size="10" fill="#000" font-weight="normal" textLength="16.80" lengthAdjust="spacingAndGlyphs" stroke="#000" stroke-width="0.25">800</text>
<text x="252.00" y="349.00" font-size="10" fill="#000" font-weight="normal" textLength="22.40" lengthAdjust="spacingAndGlyphs" stroke="#000" stroke-width="0.25">1000</text>
<text x="252.00" y="316.00" font-size="10" fill="#000" font-weight="normal" textLength="22.40" lengthAdjust="spacingAndGlyphs" stroke="#000" stroke-width="0.25">1200</text>
<text x="252.00" y="283.00" font-size="10" fill="#000" font-weight="normal" textLength="22.40" lengthAdjust="spacingAndGlyphs" stroke="#000" stroke-width="0.25">1400</text>
<text x="38.02" y="529.00" font-size="10" fill="#000" font-weight="normal" textLength="16.96" lengthAdjust="spacingAndGlyphs" stroke="#000" stroke-width="0.25">−12</text>
<text x="71.02" y="529.00" font-size="10" fill="#000" font-weight="normal" textLength="16.96" lengthAdjust="spacingAndGlyphs" stroke="#000" stroke-width="0.25">−10</text>
<text x="106.80" y="529.00" font-size="10" fill="#000" font-weight="normal" textLength="11.40" lengthAdjust="spacingAndGlyphs" stroke="#000" stroke-width="0.25">−8</text>
<text x="139.80" y="529.00" font-size="10" fill="#000" font-weight="normal" textLength="11.40" lengthAdjust="spacingAndGlyphs" stroke="#000" stroke-width="0.25">−6</text>
<text x="173.80" y="529.00" font-size="10" fill="#000" font-weight="normal" textLength="11.40" lengthAdjust="spacingAndGlyphs" stroke="#000" stroke-width="0.25">−4</text>
<text x="206.80" y="529.00" font-size="10" fill="#000" font-weight="normal" textLength="11.40" lengthAdjust="spacingAndGlyphs" stroke="#000" stroke-width="0.25">−2</text>
<text x="242.42" y="529.00" font-size="10" fill="#000" font-weight="normal" textLength="5.56" lengthAdjust="spacingAndGlyphs" stroke="#000" stroke-width="0.25">0</text>
<text x="275.42" y="529.00" font-size="10" fill="#000" font-weight="normal" textLength="5.56" lengthAdjust="spacingAndGlyphs" stroke="#000" stroke-width="0.25">2</text>
<text x="308.42" y="529.00" font-size="10" fill="#000" font-weight="normal" textLength="5.56" lengthAdjust="spacingAndGlyphs" stroke="#000" stroke-width="0.25">4</text>
<text x="341.42" y="529.00" font-size="10" fill="#000" font-weight="normal" textLength="5.56" lengthAdjust="spacingAndGlyphs" stroke="#000" stroke-width="0.25">6</text>
<text x="374.42" y="529.00" font-size="10" fill="#000" font-weight="normal" textLength="5.56" lengthAdjust="spacingAndGlyphs" stroke="#000" stroke-width="0.25">8</text>
<text x="449.04" y="529.00" font-size="10" fill="#000" font-weight="normal" textLength="16.96" lengthAdjust="spacingAndGlyphs" stroke="#000" stroke-width="0.25">−10</text>
<text x="454.60" y="504.00" font-size="10" fill="#000" font-weight="normal" textLength="11.40" lengthAdjust="spacingAndGlyphs" stroke="#000" stroke-width="0.25">−8</text>
<text x="454.60" y="480.00" font-size="10" fill="#000" font-weight="normal" textLength="11.40" lengthAdjust="spacingAndGlyphs" stroke="#000" stroke-width="0.25">−6</text>
<text x="454.60" y="455.00" font-size="10" fill="#000" font-weight="normal" textLength="11.40" lengthAdjust="spacingAndGlyphs" stroke="#000" stroke-width="0.25">−4</text>
<text x="454.60" y="431.00" font-size="10" fill="#000" font-weight="normal" textLength="11.40" lengthAdjust="spacingAndGlyphs" stroke="#000" stroke-width="0.25">−2</text>
<text x="460.44" y="406.00" font-size="10" fill="#000" font-weight="normal" textLength="5.56" lengthAdjust="spacingAndGlyphs" stroke="#000" stroke-width="0.25">0</text>
<text x="460.44" y="381.00" font-size="10" fill="#000" font-weight="normal" textLength="5.56" lengthAdjust="spacingAndGlyphs" stroke="#000" stroke-width="0.25">2</text>
<text x="460.44" y="357.00" font-size="10" fill="#000" font-weight="normal" textLength="5.56" lengthAdjust="spacingAndGlyphs" stroke="#000" stroke-width="0.25">4</text>
<text x="460.44" y="332.00" font-size="10" fill="#000" font-weight="normal" textLength="5.56" lengthAdjust="spacingAndGlyphs" stroke="#000" stroke-width="0.25">6</text>
<text x="460.44" y="308.00" font-size="10" fill="#000" font-weight="normal" textLength="5.56" lengthAdjust="spacingAndGlyphs" stroke="#000" stroke-width="0.25">8</text>
<text x="454.88" y="283.00" font-size="10" fill="#000" font-weight="normal" textLength="11.12" lengthAdjust="spacingAndGlyphs" stroke="#000" stroke-width="0.25">10</text>
<text x="496.45" y="420.00" font-size="10" fill="#000" font-weight="normal" textLength="16.30" lengthAdjust="spacingAndGlyphs" stroke="#000" stroke-width="0.25">200</text>
<text x="531.45" y="420.00" font-size="10" fill="#000" font-weight="normal" textLength="16.30" lengthAdjust="spacingAndGlyphs" stroke="#000" stroke-width="0.25">400</text>
<text x="565.45" y="420.00" font-size="10" fill="#000" font-weight="normal" textLength="16.30" lengthAdjust="spacingAndGlyphs" stroke="#000" stroke-width="0.25">600</text>
<text x="599.45" y="420.00" font-size="10" fill="#000" font-weight="normal" textLength="16.30" lengthAdjust="spacingAndGlyphs" stroke="#000" stroke-width="0.25">800</text>
<text x="630.65" y="420.00" font-size="10" fill="#000" font-weight="normal" textLength="21.90" lengthAdjust="spacingAndGlyphs" stroke="#000" stroke-width="0.25">1000</text>
<text x="664.65" y="420.00" font-size="10" fill="#000" font-weight="normal" textLength="21.90" lengthAdjust="spacingAndGlyphs" stroke="#000" stroke-width="0.25">1200</text>
<text x="699.65" y="420.00" font-size="10" fill="#000" font-weight="normal" textLength="21.90" lengthAdjust="spacingAndGlyphs" stroke="#000" stroke-width="0.25">1400</text>
<text x="733.65" y="420.00" font-size="10" fill="#000" font-weight="normal" textLength="21.90" lengthAdjust="spacingAndGlyphs" stroke="#000" stroke-width="0.25">1600</text>
<text x="767.65" y="420.00" font-size="10" fill="#000" font-weight="normal" textLength="21.90" lengthAdjust="spacingAndGlyphs" stroke="#000" stroke-width="0.25">1800</text>
</svg>
</body></html>
